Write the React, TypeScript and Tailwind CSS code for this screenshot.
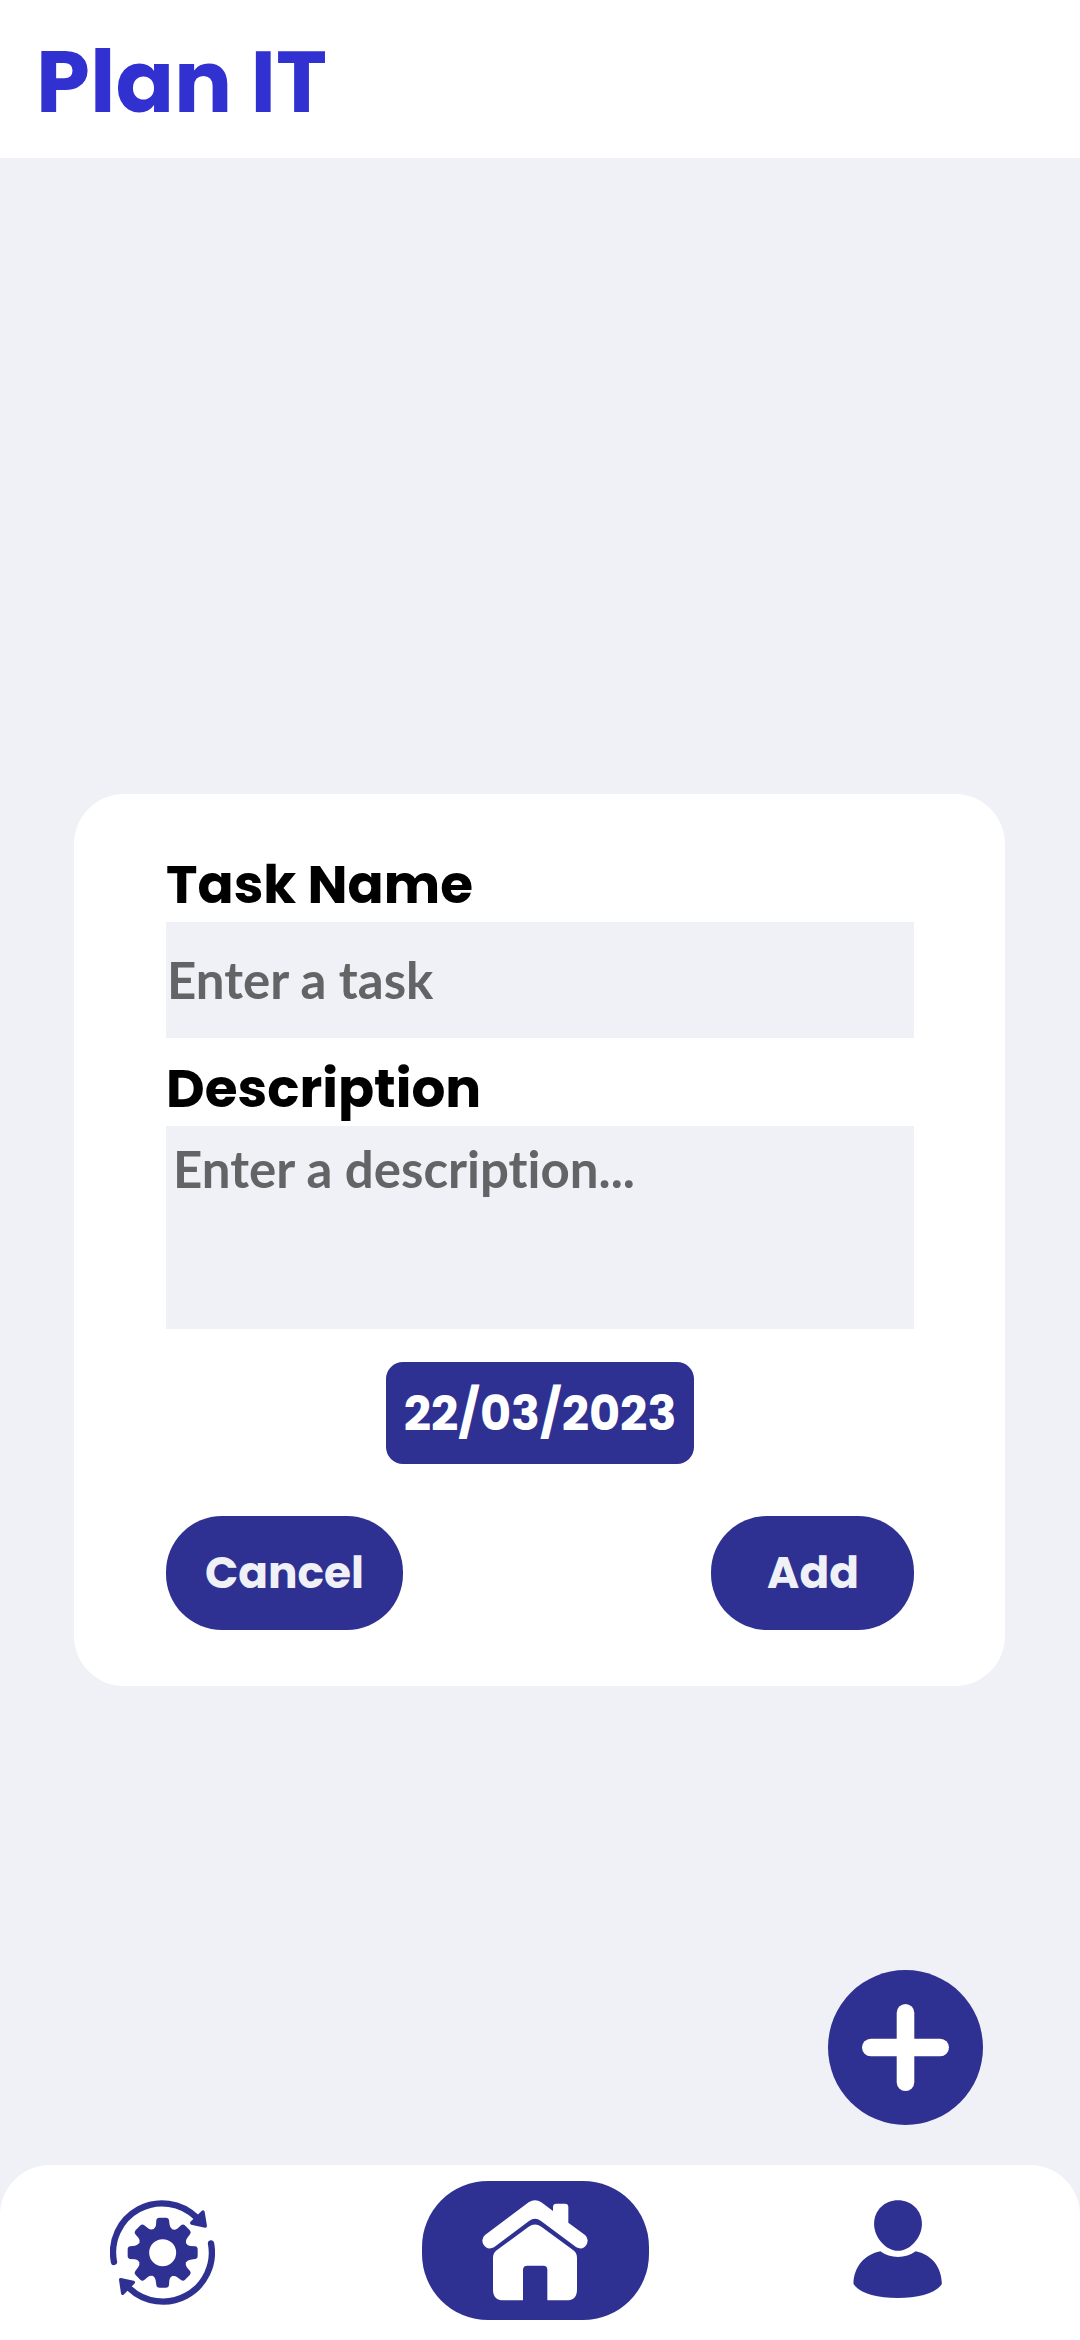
import React from "react";

function GearIcon() {
  return (
    <svg className="h-[105px] w-[105px]" viewBox="90 121 315 315" fill="none">
      <g stroke="#2e3192" strokeWidth="19" strokeLinecap="round">
        <path d="M102 307A147 147 0 0 1 349 173" />
        <path d="M393 251A147 147 0 0 1 147 385" />
      </g>
      <g fill="#2e3192" stroke="#2e3192" strokeWidth="10" strokeLinejoin="round">
        <path d="M369 157L376 199L335 190Z" />
        <path d="M122 360L160 368L128 401Z" />
      </g>
      <g fill="#2e3192">
        {[0, 45, 90, 135, 180, 225, 270, 315].map((angle) => (
          <path
            key={angle}
            transform={`rotate(${angle} 248 279)`}
            d="M221 208Q227 204 228 196L229 182Q230 174 238 174H258Q266 174 267 182L269 196Q270 204 276 208L270 230H226Z"
          />
        ))}
      </g>
      <circle cx="248" cy="279" r="58" stroke="#2e3192" strokeWidth="35" />
    </svg>
  );
}

function HomeIcon() {
  return (
    <svg className="h-[101px] w-[106px]" viewBox="247 121 318 303" fill="#fff">
      <path d="M387 128Q406 116 425 128L460 154V142Q460 132 470 132H496Q506 132 506 142V189L556 226Q568 236 562 252C556 266 543 270 530 263L424 184Q406 171 388 184L283 263C270 270 257 266 250 252Q244 236 256 226Z" />
      <path d="M387 201Q406 188 425 201L521 272Q532 281 532 294V390Q532 422 500 422H443V330Q443 318 431 318H383Q370 318 370 331V422H312Q280 422 280 390V294Q280 281 291 272Z" />
    </svg>
  );
}

function UserIcon() {
  return (
    <svg className="h-[98px] w-[89px]" viewBox="99 151 267 295" fill="#2e3192">
      <path d="M234 152C274 152 306 182 306 223C306 264 270 304 234 304C198 304 162 264 162 223C162 182 194 152 234 152Z" />
      <path d="M181 305C210 328 258 328 287 305C334 314 366 352 366 404C348 432 296 446 233 446C170 446 118 432 100 404C100 352 134 314 181 305Z" />
    </svg>
  );
}

const heading = "font-['Poppins','Inter',sans-serif] font-bold whitespace-nowrap";
const label = `${heading} h-[76px] text-[53.25px] leading-[78px] text-black`;
const field =
  "block w-full resize-none bg-[#f0f1f6] font-['Lato',sans-serif] text-[51px] font-bold [font-variant-ligatures:none] text-[#636466] outline-none placeholder:text-[#636466] placeholder:opacity-100";

export default function App() {
  return (
    <div className="flex h-[2340px] w-[1080px] flex-col overflow-hidden bg-[#f0f1f6]">
      <header className="flex h-[158px] shrink-0 items-center bg-white pt-[7px] pl-[36px]">
        <h1 className={`${heading} text-[86.4px] leading-none text-[#3131d1]`}>Plan IT</h1>
      </header>

      <main className="flex flex-1 flex-col">
        <form className="mt-[636px] ml-[74px] flex h-[892px] w-[931px] flex-col rounded-[50px] bg-white pt-[52px] pr-[91px] pl-[92px]">
          <label className={label}>Task Name</label>
          <input className={`${field} h-[116px] pb-[2px] pl-[1px]`} placeholder="Enter a task" />
          <label className={`${label} mt-[12px]`}>Description</label>
          <textarea
            className={`${field} h-[203px] shrink-0 pt-[12px] pr-[6px] pl-[7px] leading-[62px]`}
            placeholder="Enter a description..."
          />
          <button
            type="button"
            className={`${heading} mt-[33px] h-[102px] w-[308px] self-center rounded-[17px] bg-[#2e3192] pt-[2px] text-[47.8px] text-white`}
          >
            22/03/2023
          </button>
          <div className="mt-[52px] flex h-[114px] justify-between">
            <button
              type="button"
              className={`${heading} w-[237px] rounded-[56px] bg-[#2e3192] text-[43.8px] text-[#f0f1f6]`}
            >
              Cancel
            </button>
            <button
              type="button"
              className={`${heading} w-[203px] rounded-[56px] bg-[#2e3192] pl-[1px] text-[43.8px] text-[#f0f1f6]`}
            >
              Add
            </button>
          </div>
        </form>

        <button
          type="button"
          aria-label="Add task"
          className="mt-[284px] mr-[97px] flex h-[155px] w-[155px] items-center justify-center self-end rounded-full bg-[#2e3192]"
        >
          <svg className="h-[87px] w-[87px]" viewBox="0 0 87 87" fill="#fff">
            <rect x="34.7" width="17.6" height="87" rx="8.8" />
            <rect y="34.7" width="87" height="17.6" rx="8.8" />
          </svg>
        </button>
      </main>

      <nav className="flex h-[175px] shrink-0 items-start justify-between rounded-t-[50px] bg-white pt-[16px] pr-[138px] pl-[110px]">
        <a className="mt-[19px]">
          <GearIcon />
        </a>
        <a className="mr-[-2px] flex h-[139px] w-[227px] items-start justify-center rounded-[66px] bg-[#2e3192] pt-[19px]">
          <HomeIcon />
        </a>
        <a className="mt-[19px]">
          <UserIcon />
        </a>
      </nav>
    </div>
  );
}
